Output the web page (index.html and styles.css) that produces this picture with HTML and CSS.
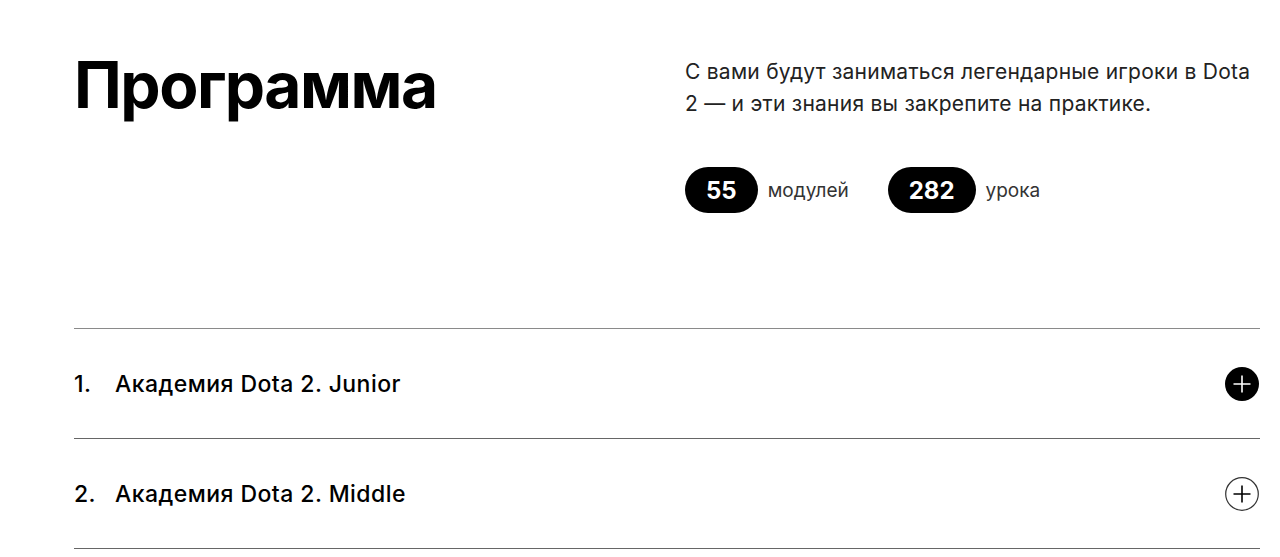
FILE: index.html
```html
<!DOCTYPE html>
<html lang="ru">
<head>
<meta charset="utf-8">
<title>Программа</title>
<link rel="stylesheet" href="styles.css">
</head>
<body>
<section class="program">
  <header class="program-head">
    <h1 class="program-title">Программа</h1>
    <div class="program-info">
      <p class="program-text">С вами будут заниматься легендарные игроки в Dota 2 — и эти знания вы закрепите на практике.</p>
      <div class="stats">
        <div class="stat"><span class="pill">55</span><span class="stat-label">модулей</span></div>
        <div class="stat"><span class="pill">282</span><span class="stat-label">урока</span></div>
      </div>
    </div>
  </header>
  <ul class="modules">
    <li class="module">
      <span class="module-num">1.</span>
      <span class="module-name">Академия Dota 2. Junior</span>
      <span class="toggle toggle-filled">
        <svg viewBox="0 0 34 34" width="34" height="34"><circle cx="17" cy="17" r="17" fill="#000"/><path d="M17 8.5v17M8.5 17h17" stroke="#fff" stroke-width="1.6"/></svg>
      </span>
    </li>
    <li class="module">
      <span class="module-num">2.</span>
      <span class="module-name">Академия Dota 2. Middle</span>
      <span class="toggle">
        <svg viewBox="0 0 34 34" width="34" height="34"><circle cx="17" cy="17" r="16.3" fill="none" stroke="#333" stroke-width="1.2"/><path d="M17 8.5v17M8.5 17h17" stroke="#000" stroke-width="1.6"/></svg>
      </span>
    </li>
  </ul>
</section>
</body>
</html>
```
FILE: styles.css
```css
* { box-sizing: border-box; }
html, body { margin: 0; padding: 0; background: #fff; }
body {
  font-family: Inter, "Noto Sans", Roboto, sans-serif;
  color: #000;
}
.program {
  padding: 0 20px 0 74px;
}
.program-head {
  display: grid;
  grid-template-columns: 611px 1fr;
  padding-top: 53px;
}
.program-title {
  margin: 0;
  font-size: 64px;
  line-height: 64px;
  font-weight: 700;
  letter-spacing: -1.5px;
}
.program-info {
  padding-top: 3px;
}
.program-text {
  margin: 0;
  font-size: 21px;
  line-height: 32px;
  letter-spacing: 0.25px;
  color: #222;
  max-width: 575px;
}
.stats {
  display: flex;
  gap: 39px;
  margin-top: 47px;
}
.stat {
  display: flex;
  align-items: center;
  gap: 10px;
}
.pill {
  display: inline-flex;
  align-items: center;
  justify-content: center;
  height: 46px;
  padding: 0 21px;
  border-radius: 23px;
  background: #000;
  color: #fff;
  font-size: 24px;
  font-weight: 700;
}
.stat-label {
  font-size: 19px;
  color: #333;
}
.modules {
  list-style: none;
  margin: 115px 0 0;
  padding: 0;
  border-top: 1px solid #8a8a8a;
}
.module {
  display: flex;
  align-items: center;
  height: 110px;
  border-bottom: 1px solid #666;
  font-size: 23px;
  font-weight: 500;
  letter-spacing: 0.45px;
}
.module-num {
  width: 41px;
}
.module-name {
  flex: 1;
}
.toggle {
  display: flex;
  width: 34px;
  height: 34px;
  margin-right: 1px;
}
```
